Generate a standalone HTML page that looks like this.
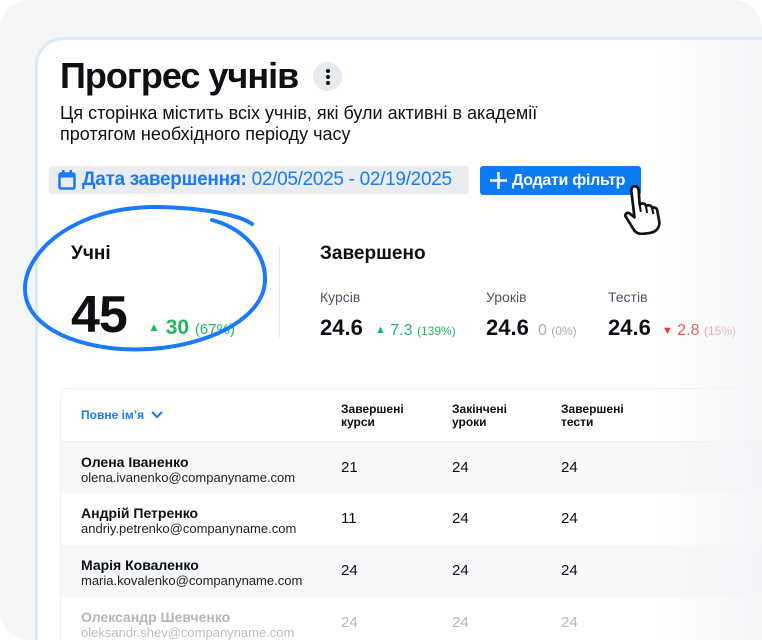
<!DOCTYPE html>
<html><head><meta charset="utf-8"><style>
*{margin:0;padding:0;box-sizing:border-box}
html,body{width:762px;height:640px;overflow:hidden}
body{background:#fff;font-family:"Liberation Sans",sans-serif;color:#0c0f14}
.wrap{position:relative;width:762px;height:640px;overflow:hidden}
.outer{position:absolute;left:0;top:0;width:762px;height:640px;background:#f4f5f7;border-radius:30px}
.card{position:absolute;left:35px;top:37px;width:727px;height:603px;background:#fff;border:3px solid #dde7fb;border-right:none;border-bottom:none;border-radius:28px 0 0 0}
.abs{position:absolute;white-space:nowrap}
h1{position:absolute;left:60px;top:55px;font-size:36px;font-weight:bold;letter-spacing:-1px;white-space:nowrap}
.dots{position:absolute;left:313px;top:62px;width:29px;height:29px;border-radius:50%;background:#e7eaef}
.dots i{position:absolute;left:13px;width:4px;height:4px;border-radius:50%;background:#111}
.sub{position:absolute;left:60px;top:103px;font-size:18px;line-height:21px;color:#111;white-space:nowrap}
.date{position:absolute;left:49px;top:166px;width:420px;height:28px;background:#e9edf2;border-radius:2px;color:#1a7af8;font-size:19px;line-height:28px;padding-left:33px;letter-spacing:-.3px;white-space:nowrap}
.btn{position:absolute;left:480px;top:166px;width:161px;height:29px;background:#0a7bf5;border-radius:3px;color:#fff;font-weight:bold;font-size:16px;line-height:29px;padding-left:32px;letter-spacing:-.3px;white-space:nowrap}
.tbl{position:absolute;left:60px;top:388px;width:702px;height:252px;border:1px solid #edf0f3;border-right:none;border-bottom:none;border-radius:8px 0 0 0;overflow:hidden;background:#fff}
.row{position:absolute;left:0;width:100%;height:52px}
.nm{position:absolute;left:20px;top:12px;font-size:14px;font-weight:bold;white-space:nowrap}
.em{position:absolute;left:20px;top:28px;font-size:13px;color:#222;white-space:nowrap}
.n{position:absolute;top:17px;font-size:15px}
.th{position:absolute;top:14px;font-size:12px;font-weight:bold;line-height:13px}
</style></head><body><div class="wrap">
<div class="outer"></div>
<div class="card"></div>
<h1>Прогрес учнів</h1>
<div class="dots"><i style="top:7px"></i><i style="top:13px"></i><i style="top:19px"></i></div>
<div class="sub">Ця сторінка містить всіх учнів, які були активні в академії<br>протягом необхідного періоду часу</div>
<div class="date"><svg style="position:absolute;left:9px;top:4px" width="18" height="20" viewBox="0 0 18 20"><rect x="1.5" y="3.5" width="15" height="15" rx="1.5" fill="none" stroke="#1a7af8" stroke-width="2.5"/><rect x="1.5" y="3.5" width="15" height="4" fill="#1a7af8"/><rect x="4" y="0" width="2.5" height="5" fill="#1a7af8"/><rect x="11.5" y="0" width="2.5" height="5" fill="#1a7af8"/></svg><b>Дата завершення:</b> 02/05/2025 - 02/19/2025</div>
<div class="btn"><svg style="position:absolute;left:10px;top:6px" width="17" height="17"><path d="M8.5 0v17M0 8.5h17" stroke="#fff" stroke-width="2.5"/></svg>Додати фільтр</div>
<svg class="abs" style="left:622px;top:183px" width="52" height="52" viewBox="0 0 50 50"><path d="M10 4c3-2 6 0 6 3l1 14c2-2 5-2 6 1 2-1 5-1 6 2 2-1 5 0 5 3l2 11c0 5-3 9-9 10l-8 1c-3 0-5-1-7-3L4 33c-2-2 0-5 3-4l5 4L9 8c0-2 0-3 1-4z" fill="#fff" stroke="#111" stroke-width="2.6" stroke-linejoin="round"/><path d="M17 21l1 6M23 22l1 6M29 24l1 5" stroke="#111" stroke-width="2" stroke-linecap="round"/></svg>
<div class="abs" style="left:71px;top:243px;font-size:19px;font-weight:bold">Учні</div>
<div class="abs" style="left:71px;top:285px;font-size:52px;font-weight:bold;letter-spacing:-1px">45</div>
<div class="abs" style="left:148px;top:316px;font-size:21px;color:#1fb861;font-weight:bold"><span style="font-size:12px;vertical-align:3px">▲</span> 30 <span style="font-size:15px;font-weight:normal">(67%)</span></div>
<svg class="abs" style="left:0;top:190px" width="300" height="180" viewBox="0 190 300 180"><path d="M212 220C250 230 272 262 263 292C250 330 180 356 110 348C50 340 14 312 28 272C45 230 100 206 160 207C200 208 238 214 252 224" fill="none" stroke="#1a7af8" stroke-width="4" stroke-linecap="round"/></svg>
<div class="abs" style="left:279px;top:246px;width:1px;height:92px;background:#e6e8ec"></div>
<div class="abs" style="left:320px;top:243px;font-size:19px;font-weight:bold">Завершено</div>
<div class="abs" style="left:320px;top:289px;font-size:14px;color:#4b5563">Курсів</div>
<div class="abs" style="left:486px;top:289px;font-size:14px;color:#4b5563">Уроків</div>
<div class="abs" style="left:608px;top:289px;font-size:14px;color:#4b5563">Тестів</div>
<div class="abs" style="left:320px;top:315px;font-size:22px;font-weight:bold">24.6 <span style="color:#1fb861;font-size:16px;font-weight:normal;margin-left:6px"><span style="font-size:11px;vertical-align:2px">▲</span> 7.3 <span style="font-size:12px">(139%)</span></span></div>
<div class="abs" style="left:486px;top:315px;font-size:22px;font-weight:bold">24.6 <span style="color:#a7adb5;font-size:16px;font-weight:normal;margin-left:3px">0 <span style="font-size:12px">(0%)</span></span></div>
<div class="abs" style="left:608px;top:315px;font-size:22px;font-weight:bold">24.6 <span style="color:#ee2222;font-size:16px;font-weight:normal;margin-left:5px"><span style="font-size:11px;vertical-align:1px">▼</span> 2.8 <span style="font-size:12px;color:#e86a6a">(15%)</span></span></div>
<div class="tbl">
<div class="abs" style="left:20px;top:19px;font-size:12px;font-weight:bold;color:#1a7af8">Повне ім’я <svg width="12" height="8" style="margin-left:4px"><path d="M1 1l5 5 5-5" fill="none" stroke="#1a7af8" stroke-width="2"/></svg></div>
<div class="th" style="left:280px">Завершені<br>курси</div>
<div class="th" style="left:391px">Закінчені<br>уроки</div>
<div class="th" style="left:500px">Завершені<br>тести</div>
<div class="row" style="top:52px;background:#f7f8f9;border-top:1px solid #eceff3"><div class="nm">Олена Іваненко</div><div class="em">olena.ivanenko@companyname.com</div><div class="n" style="left:280px">21</div><div class="n" style="left:391px">24</div><div class="n" style="left:500px">24</div></div>
<div class="row" style="top:104px"><div class="nm">Андрій Петренко</div><div class="em">andriy.petrenko@companyname.com</div><div class="n" style="left:280px">11</div><div class="n" style="left:391px">24</div><div class="n" style="left:500px">24</div></div>
<div class="row" style="top:156px;background:#f7f8f9"><div class="nm">Марія Коваленко</div><div class="em">maria.kovalenko@companyname.com</div><div class="n" style="left:280px">24</div><div class="n" style="left:391px">24</div><div class="n" style="left:500px">24</div></div>
<div class="row" style="top:208px;height:44px;opacity:.3"><div class="nm">Олександр Шевченко</div><div class="em">oleksandr.shev@companyname.com</div><div class="n" style="left:280px">24</div><div class="n" style="left:391px">24</div><div class="n" style="left:500px">24</div></div>
</div>
<div class="abs" style="left:36px;top:40px;width:726px;height:600px;background:linear-gradient(90deg,rgba(255,255,255,0) 85%,rgba(243,244,247,.85) 100%)"></div>
</div></body></html>
